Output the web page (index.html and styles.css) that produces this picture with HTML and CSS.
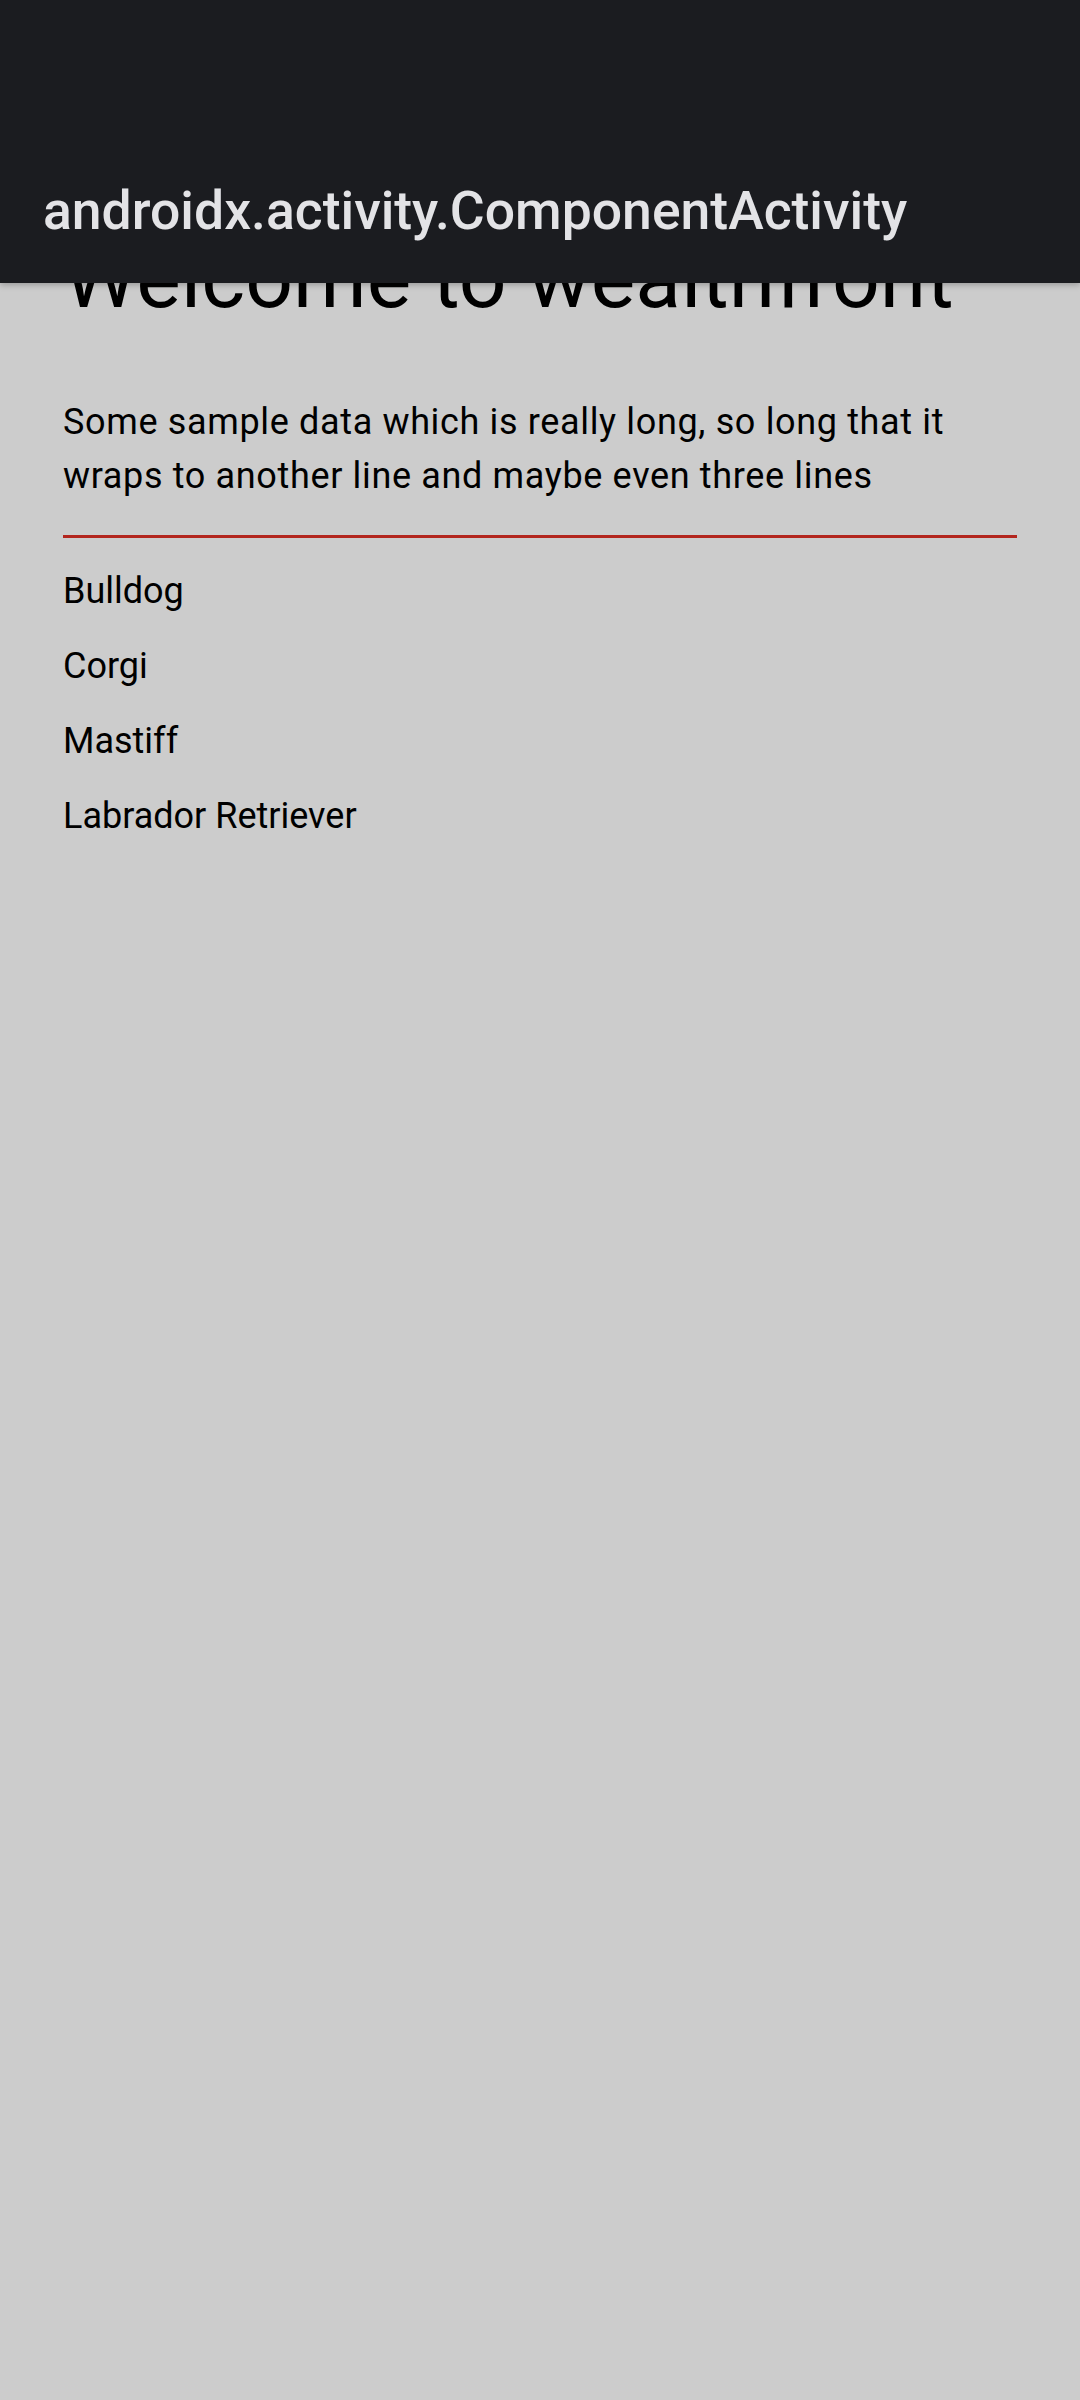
FILE: index.html
```html
<!DOCTYPE html>
<html lang="en">
<head>
<meta charset="utf-8">
<title>androidx.activity.ComponentActivity</title>
<link rel="stylesheet" href="styles.css">
</head>
<body>
<div class="screen">
  <main class="content">
    <h1 class="heading">Welcome to wealthfront</h1>
    <p class="intro">Some sample data which is really long, so long that it wraps to another line and maybe even three lines</p>
    <hr class="divider">
    <ul class="dogs">
      <li class="dog">Bulldog</li>
      <li class="dog">Corgi</li>
      <li class="dog">Mastiff</li>
      <li class="dog">Labrador Retriever</li>
    </ul>
  </main>
  <header class="appbar">
    <span class="appbar-title">androidx.activity.ComponentActivity</span>
  </header>
</div>
</body>
</html>
```

FILE: styles.css
```css
html, body {
  margin: 0;
  padding: 0;
  background: #cccccc;
}
body {
  font-family: Roboto, "Liberation Sans", sans-serif;
  color: #000;
}
.screen {
  position: relative;
  width: 1080px;
  height: 2400px;
  overflow: hidden;
  background: #cccccc;
}
.appbar {
  position: absolute;
  top: 0;
  left: 0;
  right: 0;
  height: 283px;
  box-sizing: border-box;
  background: #1b1c20;
  display: flex;
  align-items: flex-end;
  padding: 0 0 41px 43px;
  box-shadow: 0 2px 6px rgba(0, 0, 0, 0.25);
}
.appbar-title {
  color: #e3e3e6;
  font-size: 53.5px;
  font-weight: 500;
  line-height: 62px;
  white-space: nowrap;
}
.content {
  padding: 230px 63px 0 63px;
  display: flex;
  flex-direction: column;
}
.heading {
  margin: 0;
  font-size: 84px;
  font-weight: 400;
  line-height: 98px;
  white-space: nowrap;
}
.intro {
  margin: 67px 0 0 0;
  font-size: 36px;
  line-height: 54px;
  letter-spacing: 0.65px;
}
.divider {
  margin: 32px 0 0 0;
  border: 0;
  height: 3px;
  background: #b3261e;
}
.dogs {
  list-style: none;
  margin: 16px 0 0 0;
  padding: 0;
}
.dog {
  font-size: 36px;
  line-height: 75px;
}
```
